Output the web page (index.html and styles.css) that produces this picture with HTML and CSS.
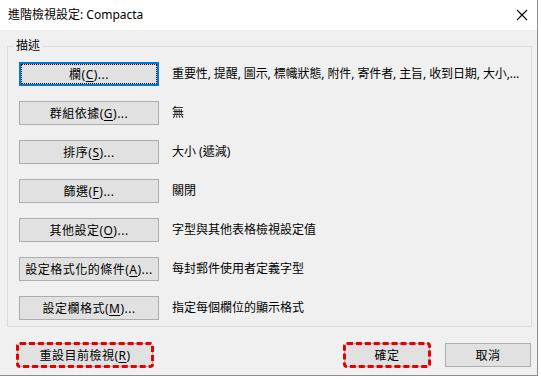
FILE: index.html
```html
<!DOCTYPE html>
<html lang="zh-Hant">
<head>
    <meta charset="UTF-8">
    <title>進階檢視設定: Compacta</title>
    <link rel="stylesheet" href="styles.css">
</head>
<body>

    <div class="dialog">
        <div class="titlebar">
            <span class="title">進階檢視設定: Compacta</span>
            <svg class="close" width="12" height="12" viewBox="0 0 12 12">
                <path d="M1 1 L11 11 M11 1 L1 11" stroke="#000" stroke-width="1.1" fill="none"/>
            </svg>
        </div>

        <fieldset class="group">
            <legend>描述</legend>
            <div class="row">
                <button class="btn focused">欄(<u>C</u>)...</button>
                <span class="desc tight">重要性, 提醒, 圖示, 標幟狀態, 附件, 寄件者, 主旨, 收到日期, 大小,...</span>
            </div>
            <div class="row">
                <button class="btn">群組依據(<u>G</u>)...</button>
                <span class="desc">無</span>
            </div>
            <div class="row">
                <button class="btn">排序(<u>S</u>)...</button>
                <span class="desc">大小 (遞減)</span>
            </div>
            <div class="row">
                <button class="btn">篩選(<u>F</u>)...</button>
                <span class="desc">關閉</span>
            </div>
            <div class="row">
                <button class="btn">其他設定(<u>O</u>)...</button>
                <span class="desc">字型與其他表格檢視設定值</span>
            </div>
            <div class="row">
                <button class="btn">設定格式化的條件(<u>A</u>)...</button>
                <span class="desc">每封郵件使用者定義字型</span>
            </div>
            <div class="row">
                <button class="btn">設定欄格式(<u>M</u>)...</button>
                <span class="desc">指定每個欄位的顯示格式</span>
            </div>
        </fieldset>

        <div class="footer">
            <button class="btn reset marked">重設目前檢視(<u>R</u>)</button>
            <button class="btn small marked">確定</button>
            <button class="btn small">取消</button>
        </div>
    </div>

</body>
</html>
```

FILE: styles.css
```css
body {
    margin: 0;
    background-color: #ffffff;
    font-family: "Noto Sans", "Noto Sans CJK TC", sans-serif;
    font-size: 12px;
    color: #000;
}
.dialog {
    width: 537px;
    height: 375px;
    background-color: #f0f0f0;
    border-right: 1px solid #8c8c8c;
    border-bottom: 1px solid #8c8c8c;
    display: flex;
    flex-direction: column;
}
.titlebar {
    height: 30px;
    background-color: #ffffff;
    display: flex;
    align-items: center;
    justify-content: space-between;
    padding: 0 9px 0 8px;
}
.title {
    font-size: 12px;
    line-height: 14px;
}
.group {
    margin: 9px 5px 0 7px;
    padding: 9px 0 6px 11px;
    border: 1px solid #dcdcdc;
    display: flex;
    flex-direction: column;
    gap: 15px;
}
.group legend {
    margin-left: -5px;
    padding: 0 2px;
    line-height: 14px;
}
.row {
    display: flex;
    align-items: center;
    gap: 13px;
}
.btn {
    font-family: inherit;
    font-size: 12px;
    color: #000;
    width: 140px;
    height: 24px;
    padding: 0;
    background-color: #e1e1e1;
    border: 1px solid #adadad;
    border-radius: 0;
    letter-spacing: 0.5px;
}
.btn u {
    text-decoration-thickness: 1px;
    text-underline-offset: 2px;
}
.btn.focused {
    border: 2px solid #0078d7;
    outline: 1px dotted #000;
    outline-offset: -3px;
}
.desc {
    white-space: nowrap;
    line-height: 14px;
}
.desc.tight {
    letter-spacing: -0.1px;
}
.footer {
    display: flex;
    align-items: center;
    gap: 15px;
    padding: 16px 6px 0 17px;
}
.btn.reset {
    width: 136px;
    margin-right: auto;
}
.btn.small {
    width: 86px;
}
.btn.marked {
    outline: 3px dashed #e60000;
    outline-offset: -2px;
    border-radius: 3px;
}
```
